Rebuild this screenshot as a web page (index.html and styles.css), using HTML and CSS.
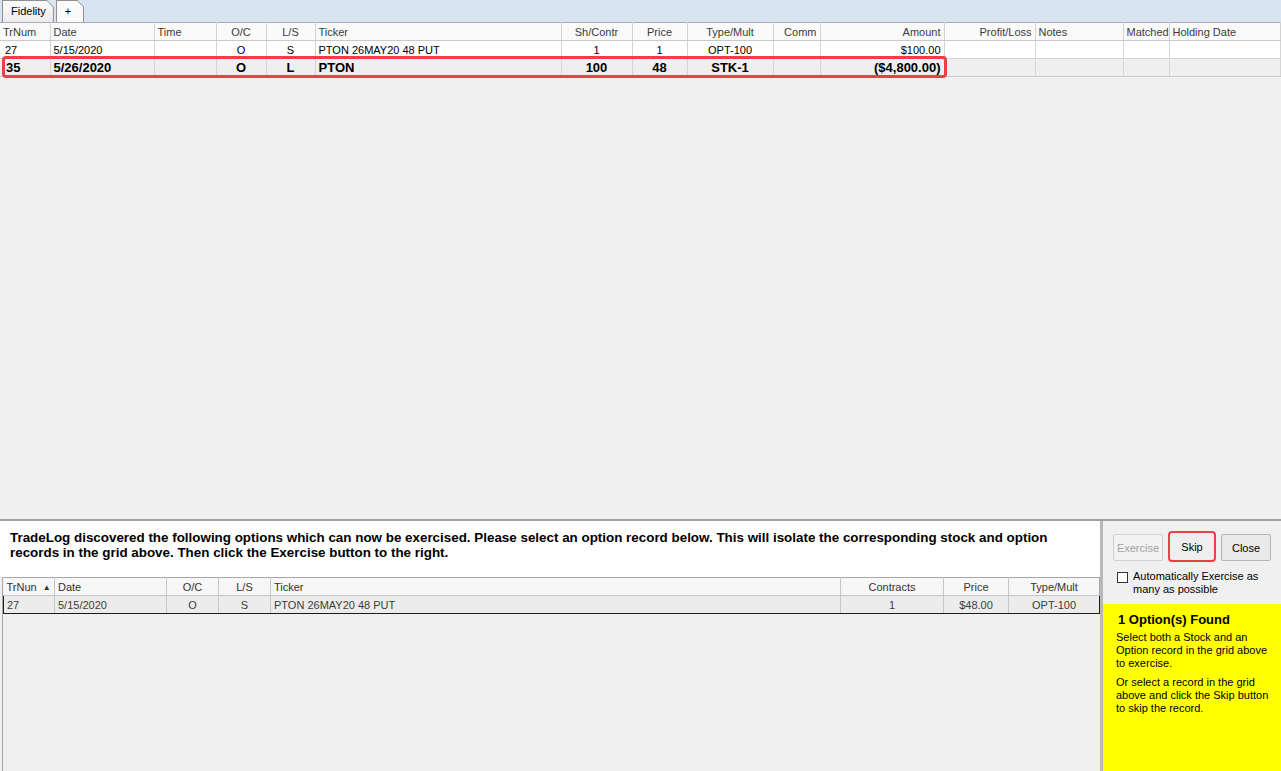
FILE: index.html
```html
<!DOCTYPE html>
<html lang="en">
<head>
  <meta charset="UTF-8">
  <title>TradeLog - Exercise Options</title>
  <link rel="stylesheet" href="styles.css">
</head>
<body>

  <div class="app">

    <div class="tabs">
      <div class="tab"><span>Fidelity</span></div>
      <div class="tab plus"><span>+</span></div>
    </div>

    <div class="trades">
      <table class="grid top-grid">
        <colgroup>
          <col style="width:50px"><col style="width:104px"><col style="width:62px"><col style="width:50px">
          <col style="width:49px"><col style="width:246px"><col style="width:71px"><col style="width:55px">
          <col style="width:86px"><col style="width:47px"><col style="width:124px"><col style="width:91px">
          <col style="width:88px"><col style="width:46px"><col>
        </colgroup>
        <thead>
          <tr>
            <th>TrNum</th>
            <th>Date</th>
            <th>Time</th>
            <th class="c">O/C</th>
            <th class="c">L/S</th>
            <th>Ticker</th>
            <th class="c">Sh/Contr</th>
            <th class="c">Price</th>
            <th class="c">Type/Mult</th>
            <th class="r">Comm</th>
            <th class="r">Amount</th>
            <th class="r">Profit/Loss</th>
            <th>Notes</th>
            <th class="r">Matched</th>
            <th>Holding Date</th>
          </tr>
        </thead>
        <tbody>
          <tr>
            <td>27</td>
            <td>5/15/2020</td>
            <td></td>
            <td class="c">O</td>
            <td class="c">S</td>
            <td>PTON 26MAY20 48 PUT</td>
            <td class="c">1</td>
            <td class="c">1</td>
            <td class="c">OPT-100</td>
            <td></td>
            <td class="r">$100.00</td>
            <td></td>
            <td></td>
            <td></td>
            <td></td>
          </tr>
          <tr class="stock">
            <td>35</td>
            <td>5/26/2020</td>
            <td></td>
            <td class="c">O</td>
            <td class="c">L</td>
            <td>PTON</td>
            <td class="c">100</td>
            <td class="c">48</td>
            <td class="c">STK-1</td>
            <td></td>
            <td class="r">($4,800.00)</td>
            <td></td>
            <td></td>
            <td></td>
            <td></td>
          </tr>
        </tbody>
      </table>
      <div class="mark"></div>
    </div>

    <div class="splitter"></div>

    <div class="bottom">
      <div class="bottom-left">
        <div class="message">
          TradeLog discovered the following options which can now be exercised. Please select an option record below. This will isolate the corresponding stock and option records in the grid above. Then click the Exercise button to the right.
        </div>
        <div class="options">
          <table class="grid option-grid">
            <colgroup>
              <col style="width:51px"><col style="width:112px"><col style="width:52px"><col style="width:52px">
              <col style="width:570px"><col style="width:103px"><col style="width:65px"><col style="width:91px">
            </colgroup>
            <thead>
              <tr>
                <th>TrNun <span class="sort">&#9650;</span></th>
                <th>Date</th>
                <th class="c">O/C</th>
                <th class="c">L/S</th>
                <th>Ticker</th>
                <th class="c">Contracts</th>
                <th class="c">Price</th>
                <th class="c">Type/Mult</th>
              </tr>
            </thead>
            <tbody>
              <tr class="selected">
                <td>27</td>
                <td>5/15/2020</td>
                <td class="c">O</td>
                <td class="c">S</td>
                <td>PTON 26MAY20 48 PUT</td>
                <td class="c">1</td>
                <td class="c">$48.00</td>
                <td class="c">OPT-100</td>
              </tr>
            </tbody>
          </table>
        </div>
      </div>

      <div class="side">
        <div class="buttons">
          <button class="btn" disabled>Exercise</button>
          <button class="btn skip">Skip</button>
          <button class="btn">Close</button>
        </div>
        <label class="auto">
          <span class="box"></span>
          <span>Automatically Exercise as<br>many as possible</span>
        </label>
        <div class="info">
          <h3>1 Option(s) Found</h3>
          <p>Select both a Stock and an<br>Option record in the grid above<br>to exercise.</p>
          <p>Or select a record in the grid<br>above and click the Skip button<br>to skip the record.</p>
        </div>
      </div>
    </div>

  </div>

</body>
</html>
```

FILE: styles.css
```css
body {
  margin: 0;
  padding: 0;
  font-family: "Liberation Sans", Arial, sans-serif;
  font-size: 11px;
  color: #000;
}

.app {
  width: 1281px;
  height: 771px;
  display: flex;
  flex-direction: column;
  background-color: #f0f0f0;
  overflow: hidden;
}

/* tab strip */

.tabs {
  height: 22px;
  flex: none;
  display: flex;
  align-items: flex-end;
  gap: 2px;
  padding-left: 2px;
  background-color: #d8e4f1;
}

.tab {
  height: 22px;
  padding: 1px 1px 0 1px;
  box-sizing: border-box;
  background-color: #8f8f8f;
  clip-path: polygon(0 0, calc(100% - 7px) 0, 100% 7px, 100% 100%, 0 100%);
}

.tab span {
  display: block;
  height: 21px;
  line-height: 20px;
  padding: 0 7px 0 8px;
  background: linear-gradient(#fbfbfb, #ececec);
  clip-path: polygon(0 0, calc(100% - 6px) 0, 100% 6px, 100% 100%, 0 100%);
}

.tab.plus span {
  padding: 0 12px 0 8px;
  background: #fafafa;
}

/* grids */

.trades {
  flex: 1;
  position: relative;
}

.grid {
  border-collapse: collapse;
  table-layout: fixed;
}

.grid th,
.grid td {
  height: 17px;
  padding: 0 3px;
  white-space: nowrap;
  overflow: hidden;
  text-align: left;
  font-weight: normal;
}

.grid .c { text-align: center; }
.grid .r { text-align: right; }

.top-grid {
  width: 1281px;
}

.top-grid th {
  color: #3a3a3a;
  background-color: #fafafa;
  border-top: 1px solid #a3adb9;
  border-right: 1px solid #d2d2d2;
  border-bottom: 1px solid #c9c9c9;
}

.top-grid td {
  background-color: #fff;
  border-right: 1px solid #d5d5d5;
  border-bottom: 1px solid #d5d5d5;
}

.top-grid td:first-child {
  padding-left: 5px;
}

.top-grid tr.stock td {
  background-color: #efefef;
  font-weight: bold;
  font-size: 13px;
  border-bottom-color: #c9c9c9;
}

.top-grid tr.stock td:first-child {
  padding-left: 6px;
}

.mark {
  position: absolute;
  left: 2px;
  top: 34px;
  width: 939px;
  height: 16px;
  border: 3px solid #ea4149;
  border-radius: 4px;
}

.splitter {
  height: 2px;
  flex: none;
  background-color: #a0a0a0;
}

/* bottom panel */

.bottom {
  height: 250px;
  flex: none;
  display: flex;
}

.bottom-left {
  width: 1100px;
  display: flex;
  flex-direction: column;
}

.message {
  height: 56px;
  box-sizing: border-box;
  padding: 9px 40px 0 10px;
  background-color: #fff;
  font-size: 13.4px;
  font-weight: bold;
  line-height: 15px;
}

.options {
  flex: 1;
  margin-left: 2px;
  border-left: 1px solid #a8a8a8;
}

.option-grid {
  width: 1096px;
}

.option-grid th {
  color: #333;
  background-color: #f7f7f7;
  border-top: 1px solid #a6a6a6;
  border-right: 1px solid #c6c6c6;
  border-bottom: 1px solid #c6c6c6;
}

.option-grid th:last-child {
  border-right-color: #a6a6a6;
}

.option-grid .sort {
  font-size: 8px;
  vertical-align: 1px;
  margin-left: 3px;
}

.option-grid td {
  color: #3c3c3c;
  background-color: #ececec;
  border-right: 1px solid #c8c8c8;
}

.option-grid tr.selected td {
  border-top: 1px solid #1c1c1c;
  border-bottom: 1px solid #1c1c1c;
}

.option-grid tr.selected td:first-child {
  border-left: 1px solid #1c1c1c;
}

.option-grid tr.selected td:last-child {
  border-right: 1px solid #1c1c1c;
}

/* right side */

.side {
  flex: 1;
  display: flex;
  flex-direction: column;
  border-left: 3px solid #b8b8b8;
}

.buttons {
  display: flex;
  gap: 5px;
  padding: 13px 0 0 10px;
}

.btn {
  height: 27px;
  width: 50px;
  padding: 0;
  font-family: "Liberation Sans", Arial, sans-serif;
  font-size: 11px;
  color: #000;
  background-color: #e9e9e9;
  border: 1px solid #b5b5b5;
  border-radius: 2px;
}

.btn:disabled {
  color: #a3a3a3;
  background-color: #f2f2f2;
  border-color: #d0d0d0;
}

.btn.skip {
  width: 48px;
  height: 31px;
  margin-top: -3px;
  background-color: #eeeeee;
  border: 2px solid #ea4149;
  border-radius: 4px;
}

.auto {
  display: flex;
  gap: 5px;
  padding: 8px 0 0 14px;
  line-height: 13px;
}

.box {
  width: 9px;
  height: 9px;
  margin-top: 2px;
  border: 1px solid #333;
  background-color: #fff;
}

.info {
  flex: 1;
  margin-top: 8px;
  padding: 8px 10px 0 13px;
  background-color: #ffff00;
}

.info h3 {
  margin: 0 0 3px 2px;
  font-size: 13px;
  line-height: 16px;
}

.info p {
  margin: 0 0 6px 0;
  line-height: 13px;
}
```
